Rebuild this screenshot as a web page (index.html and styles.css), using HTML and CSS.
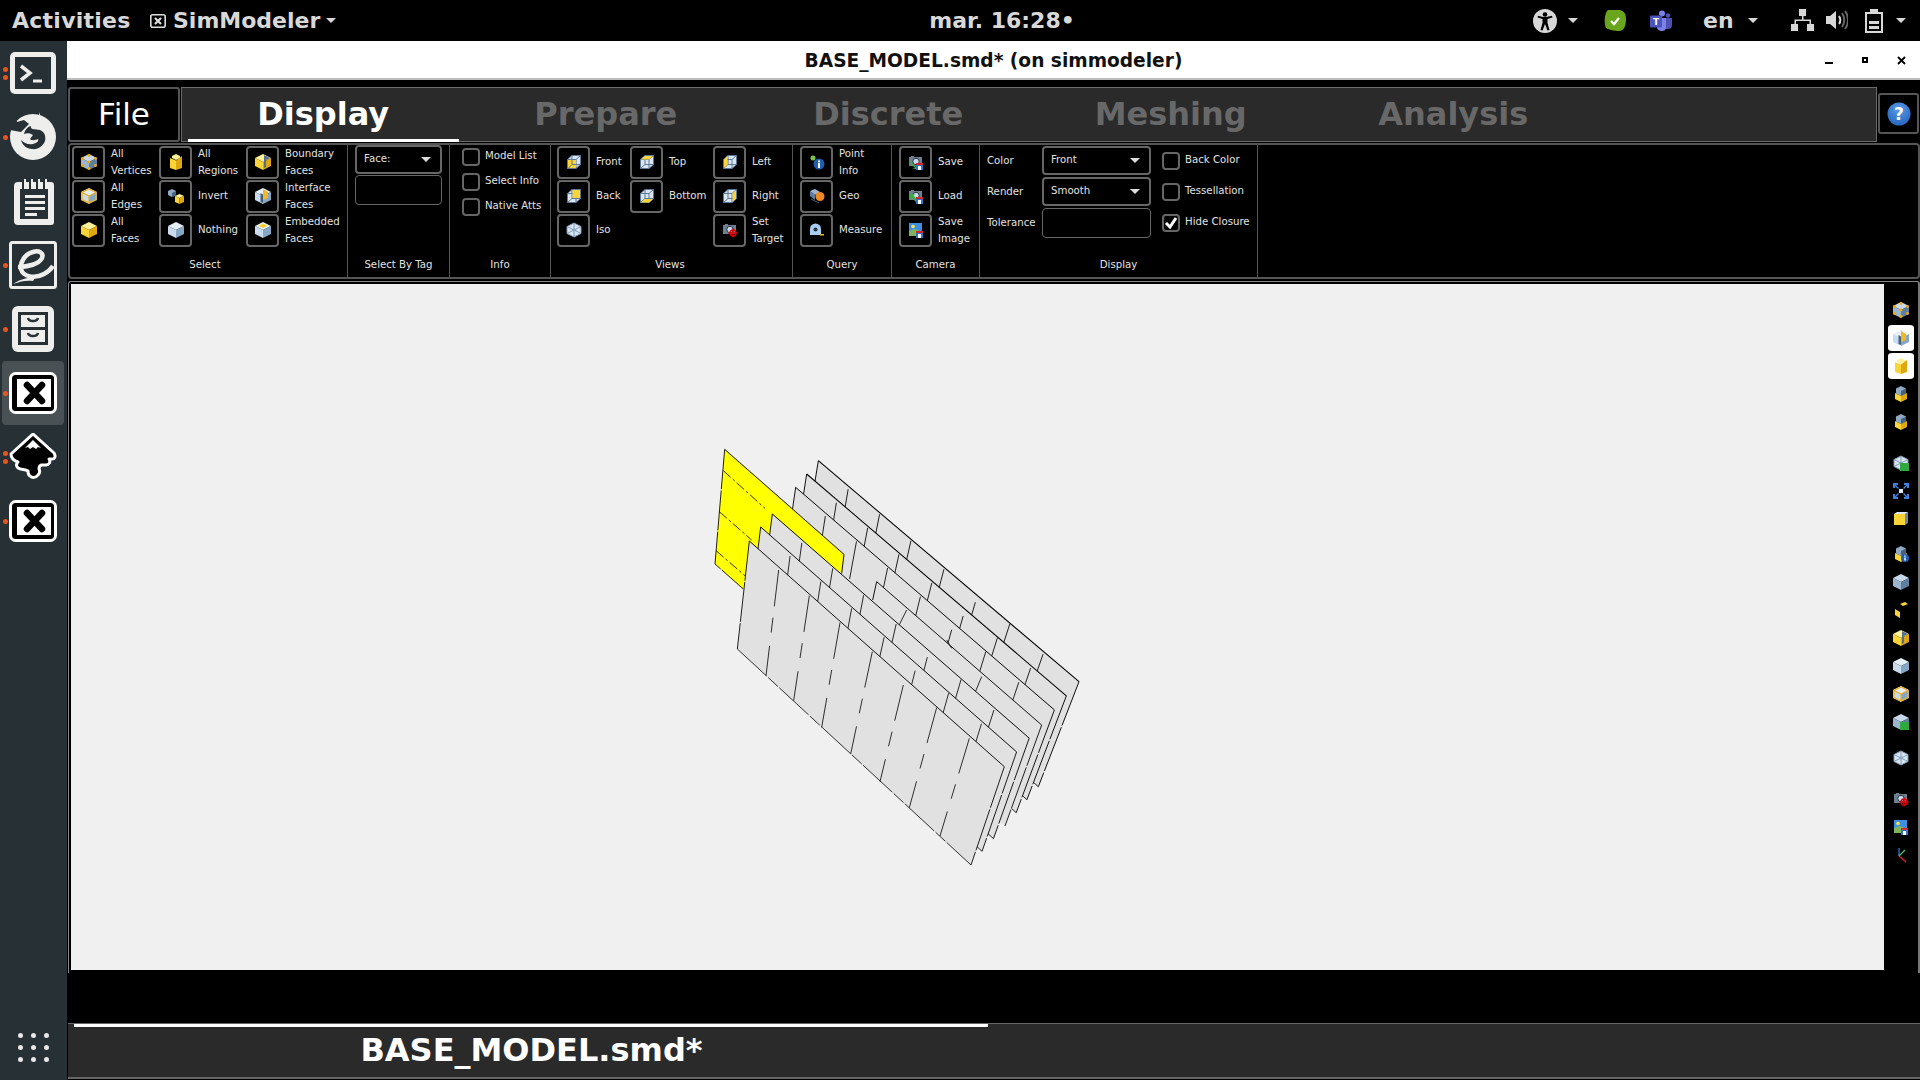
FILE: index.html
```html
<!DOCTYPE html>
<html>
<head>
	<title>BASE_MODEL.smd* (on simmodeler)</title>
	<link rel="stylesheet" href="styles.css">
</head>
<body>
	<!-- shared icon shapes -->
	<svg class="defs" width="0" height="0">
		<defs>
			<symbol id="c-blue" viewBox="0 0 16 16"><path fill="#c6d8ea" d="M8 0l8 4-8 4-8-4z"/><path fill="#9db6d0" d="M0 4l8 4v8l-8-4z"/><path fill="#5f7f9f" d="M16 4l-8 4v8l8-4z"/></symbol>
			<symbol id="c-pale" viewBox="0 0 16 16"><path fill="#e6eff8" d="M8 0l8 4-8 4-8-4z"/><path fill="#c9dcef" d="M0 4l8 4v8l-8-4z"/><path fill="#86a6c6" d="M16 4l-8 4v8l8-4z"/></symbol>
			<symbol id="c-yellow" viewBox="0 0 16 16"><path fill="#fff09a" d="M8 0l8 4-8 4-8-4z"/><path fill="#fbd437" d="M0 4l8 4v8l-8-4z"/><path fill="#e0a810" d="M16 4l-8 4v8l8-4z"/></symbol>
			<symbol id="c-mix" viewBox="0 0 16 16"><path fill="#8fa9c4" d="M8 0l5 2.500v5L8 10 3 7.500v-5z"/><path fill="#46617c" d="M13 2.500v5L8 10V5z"/><path fill="#fbd437" d="M2 7l6 3v6l-6-3z"/><path fill="#e0a810" d="M14 7l-6 3v6l6-3z"/></symbol>
			<symbol id="c-vert" viewBox="0 0 16 16"><use href="#c-blue"/><g fill="#f5a800"><circle cx="8" cy="1.500" r="1.400"/><circle cx="1.500" cy="4.500" r="1.400"/><circle cx="14.500" cy="4.500" r="1.400"/><circle cx="8" cy="8" r="1.400"/><circle cx="1.500" cy="11.500" r="1.400"/><circle cx="14.500" cy="11.500" r="1.400"/><circle cx="8" cy="14.500" r="1.400"/></g></symbol>
			<symbol id="c-edge" viewBox="0 0 16 16"><use href="#c-pale"/><path fill="none" stroke="#eeb020" stroke-width="1.300" d="M8 1l7 3.500v7L8 15l-7-3.500v-7zM1 4.500L8 8l7-3.500M8 8v7"/></symbol>
			<symbol id="c-region" viewBox="0 0 16 16"><path fill="#fff09a" d="M8 0l4 2v2L8 6 4 4V2z"/><path fill="#fbd437" d="M2 4l6 2.500V16l-6-2z"/><path fill="#e0a810" d="M14 2L8 6.500V16l6-2z"/></symbol>
			<symbol id="c-invert" viewBox="0 0 16 16"><path fill="#8fa9c4" d="M4 1l4 2v4L4 9 0 7V3z"/><path fill="#46617c" d="M8 3v4L4 9V5z"/><path fill="#fff09a" d="M11.500 6l4.500 2-4.500 2L7 8z"/><path fill="#fbd437" d="M7 8l4.500 2v6L7 14z"/><path fill="#e0a810" d="M16 8l-4.500 2v6l4.500-2z"/></symbol>
			<symbol id="c-bound" viewBox="0 0 16 16"><use href="#c-yellow"/><path fill="#52708e" d="M9 1l6 3-4 2v7l-2 1V5z"/></symbol>
			<symbol id="c-inter" viewBox="0 0 16 16"><use href="#c-pale"/><path fill="#f2b824" d="M8 1l5 3v6l-5 2z"/><path fill="#46617c" d="M5.500 5L8 6.500V15l-2.500-1z"/></symbol>
			<symbol id="c-embed" viewBox="0 0 16 16"><use href="#c-pale"/><path fill="#fbcf25" d="M8 1.500l4.500 2.300L8 6 3.500 3.800z"/></symbol>
			<symbol id="wire" viewBox="0 0 16 16"><path fill="#d9e5f2" stroke="#5b7896" d="M6 1.500h8.500v9L10 14.500H1.500v-9z"/><path fill="none" stroke="#5b7896" d="M1.500 5.500H10v9M10 5.500l4.500-4M6 1.500v9h8.500M6 10.500l-4.500 4"/></symbol>
			<symbol id="v-front" viewBox="0 0 16 16"><use href="#wire"/><path fill="#fbd437" d="M2 6h8v8H2z"/><path fill="none" stroke="#5b7896" d="M6 6v4.500H10M6 10.500l-4 4"/></symbol>
			<symbol id="v-back" viewBox="0 0 16 16"><use href="#wire"/><path fill="#fbd437" d="M6.500 2h7.500v8H6.500z"/></symbol>
			<symbol id="v-top" viewBox="0 0 16 16"><use href="#wire"/><path fill="#fbd437" d="M6 2h8l-4 3.500H2z"/></symbol>
			<symbol id="v-bottom" viewBox="0 0 16 16"><use href="#wire"/><path fill="#fbd437" d="M6 11h8l-4 3.500H2z"/></symbol>
			<symbol id="v-left" viewBox="0 0 16 16"><use href="#wire"/><path fill="#fbd437" d="M2 5.500L5.500 2v8.500L2 14z"/></symbol>
			<symbol id="v-right" viewBox="0 0 16 16"><use href="#wire"/><path fill="#fbd437" d="M10.500 5.500L14 2v8.500L10.500 14z"/></symbol>
			<symbol id="v-iso" viewBox="0 0 16 16"><path fill="#d9e5f2" stroke="#7f9ab5" d="M8 1l7 3.500v7L8 15l-7-3.500v-7z"/><path fill="none" stroke="#7f9ab5" d="M1 4.500l14 7M15 4.500l-14 7M8 1v14"/></symbol>
			<symbol id="camera" viewBox="0 0 16 16"><path fill="#6d7f90" d="M1 3h2V2h3v1h8v9H1z"/><circle cx="8" cy="7.500" r="3.200" fill="#c9dcef" stroke="#26323c"/></symbol>
			<symbol id="floppy" viewBox="0 0 16 16"><path fill="#2f74c8" d="M8 9h7v7H8z"/><path fill="#d8232a" d="M8 9h7v2H8z"/><path fill="#fff" d="M10 12h3v4h-3z"/></symbol>
			<symbol id="target" viewBox="0 0 16 16"><use href="#camera"/><g fill="none" stroke="#e00000" stroke-width="1.300"><circle cx="11" cy="11" r="3"/><path d="M11 6.500v9M6.500 11h9"/></g></symbol>
			<symbol id="p-info" viewBox="0 0 16 16"><circle cx="4" cy="4" r="2.500" fill="#7bc24b"/><circle cx="10" cy="10" r="5.500" fill="#1f5fb0"/><path fill="#fff" d="M9 6.500h2v1.800H9zM9 9h2v5H9z"/></symbol>
			<symbol id="p-geo" viewBox="0 0 16 16"><use href="#c-mix"/><circle cx="12" cy="12" r="4" fill="#1f5fb0"/><path fill="#fff" d="M11.300 9.500h1.400v1.300h-1.400zM11.300 11.500h1.400v3h-1.400z"/></symbol>
			<symbol id="geo" viewBox="0 0 16 16"><path fill="#9db6d0" d="M1 3l5-2 5 3-5 3z"/><path fill="#5f7f9f" d="M1 3l5 4v5L1 8z"/><path stroke="#46617c" d="M2 11l8 4"/><circle cx="11" cy="8.500" r="4.500" fill="#f08a24"/></symbol>
			<symbol id="measure" viewBox="0 0 16 16"><path fill="#a9cdf2" d="M1 13V7a5.500 5.500 0 0 1 11 0v6z"/><circle cx="6.500" cy="7.500" r="2" fill="#26323c"/><path fill="#f2b824" d="M11 12h4v1.500h-4z"/></symbol>
			<symbol id="cam-save" viewBox="0 0 16 16"><use href="#camera"/><path fill="#3fae3f" d="M2 7l6 6 1-3v5H4l3-1-6-6z"/><use href="#floppy"/></symbol>
			<symbol id="cam-load" viewBox="0 0 16 16"><use href="#camera"/><path fill="#3fae3f" d="M9 15L3 9l-1 3V6h6L5 7l6 6z"/><use href="#floppy"/></symbol>
			<symbol id="picture" viewBox="0 0 16 16"><path fill="#3f8fe0" d="M1 1h13v8H1z"/><path fill="#7fb45c" d="M1 9l6-2 7 3v4H1z"/><circle cx="5" cy="4.500" r="1.800" fill="#f6e24a"/><use href="#floppy"/></symbol>
			<symbol id="x-app" viewBox="0 0 48 42"><rect x="1.500" y="1.500" width="45" height="39" rx="5" fill="#000" stroke="#fff" stroke-width="3"/><rect x="8" y="7" width="34" height="28" fill="#fff"/><path stroke="#000" stroke-width="6.500" stroke-linecap="round" d="M18 13l15 16M33 13L18 29"/></symbol>
		</defs>
	</svg>

	<header class="topbar">
		<span class="activities">Activities</span>
		<span class="app-menu">
			<svg class="app-icon" viewBox="0 0 16 14"><rect x=".8" y=".8" width="14.400" height="12.400" rx="2" fill="none" stroke="#ddd" stroke-width="1.600"/><path stroke="#ddd" stroke-width="2.200" d="M5 4l6 6M11 4l-6 6"/></svg>
			SimModeler<i class="caret"></i>
		</span>
		<span class="clock">mar. 16:28&#8226;</span>
		<div class="tray">
			<svg class="tray-a11y" viewBox="0 0 24 24"><circle cx="12" cy="12" r="12" fill="#d8d8d8"/><circle cx="12" cy="5.500" r="2.300"/><path d="M4.500 8.500l5 1.500v4l-2 7 2 .5 2.500-6.500 2.500 6.500 2-.5-2-7v-4l5-1.500-.5-1.800-5.500 1.300h-3.500L5 6.700z"/></svg>
			<i class="caret caret-a11y"></i>
			<svg class="tray-shield" viewBox="0 0 22 22"><path fill="#6aa51e" d="M4 0h12c4 1 6 4 6 9 0 7-2 12-7 12-4 0-10-1-13-3C0 15 0 3 4 0z"/><path fill="none" stroke="#fff" stroke-width="2.200" d="M7 11l3 3 5-6"/></svg>
			<svg class="tray-teams" viewBox="0 0 22 22"><circle cx="12" cy="3.500" r="3" fill="#7b83eb"/><circle cx="18" cy="5.500" r="2.300" fill="#4f52b2"/><path fill="#4f52b2" d="M14 8h8v7c0 3-2 4-4 4h-4z"/><path fill="#7b83eb" d="M7 8h9v9c0 3-2 4-4 4s-5-1-5-4z"/><rect y="5.500" width="12" height="12" rx="1" fill="#4b53bc"/><text x="6" y="15" class="teams-t">T</text></svg>
			<span class="lang">en</span>
			<i class="caret caret-lang"></i>
			<svg class="tray-net" viewBox="0 0 23 23"><path fill="#d8d8d8" d="M8 0h7v7H8zM0 15h7v7H0zM16 15h7v7h-7zM11 7h1.500v3.500H20V15h-1.500v-3H5v3H3.500v-4.500H11z"/></svg>
			<svg class="tray-vol" viewBox="0 0 23 23"><path fill="#d8d8d8" d="M1 7h4l6-5v18l-6-5H1z"/><path fill="none" stroke="#d8d8d8" stroke-width="2" d="M14 7c1.500 2.500 1.500 6 0 8"/><path fill="none" stroke="#666" stroke-width="2" d="M17 4c3 4 3 10 0 14M20 2c4 5 4 13 0 18"/></svg>
			<svg class="tray-bat" viewBox="0 0 18 24"><path fill="none" stroke="#d8d8d8" stroke-width="2" d="M1 4h16v19H1z"/><path fill="#d8d8d8" d="M5 0h8v4H5zM4 12h10v3H4zM4 17h10v3H4z"/></svg>
			<i class="caret caret-bat"></i>
		</div>
	</header>

	<div class="desktop">
		<nav class="dock">
			<div class="dock-item">
				<i class="pip pip-1"></i><i class="pip pip-2"></i>
				<svg class="dock-icon" viewBox="0 0 48 48"><rect x="1" y="3" width="46" height="42" rx="5" fill="#eeeeec"/><rect x="6" y="8" width="36" height="32" fill="#263035"/><path fill="none" stroke="#eeeeec" stroke-width="3.500" d="M12 17l9 7-9 7"/><path stroke="#eeeeec" stroke-width="3" d="M24 32h9"/></svg>
			</div>
			<div class="dock-item">
				<i class="pip pip-0"></i>
				<svg class="dock-icon dock-icon-fox" viewBox="0 0 48 48"><circle cx="24" cy="25" r="23" fill="#eeeeec"/><path fill="#eeeeec" d="M30 0c1 5 5 8 10 11l-10 3z"/><path fill="#263035" d="M1 18L7 4l1 6 7-2 5 4-8 8z"/><path fill="#263035" d="M22 14c-1 4 4 3 9 4 5 2 6 7 5 11-2 5-7 9-13 8-5 0-10-4-11-9 3 3 7 5 12 4 4-1 6-3 5-5-2 1-6 2-8 0l3-4c-3-2-6-2-9-1 1-4 3-7 7-8z"/></svg>
			</div>
			<div class="dock-item">
				<svg class="dock-icon" viewBox="0 0 48 48"><path fill="#eeeeec" d="M9 5h33a3 3 0 0 1 3 3v37a3 3 0 0 1-3 3H9a4 4 0 0 1-4-4V9a4 4 0 0 1 4-4z"/><path fill="#263035" d="M11 12h28v30H11zM13 3h3v9h-3zM20 3h3v9h-3zM27 3h3v9h-3zM34 3h3v9h-3z"/><path fill="#eeeeec" d="M15 2h2v10h-2zM22 2h2v10h-2zM29 2h2v10h-2zM36 2h2v10h-2zM16 18h20v3H16zM16 24h20v3H16zM16 30h20v3H16zM16 36h12v3H16z"/></svg>
			</div>
			<div class="dock-item">
				<i class="pip pip-0"></i>
				<svg class="dock-icon" viewBox="0 0 48 48"><rect x="1.500" y="1.500" width="45" height="45" rx="2" fill="#263035" stroke="#eeeeec" stroke-width="3"/><path fill="none" stroke="#eeeeec" stroke-width="4.500" d="M9 26c10 0 21-3 24-9 2-5-3-8-9-6-8 2-13 10-12 17 2 8 14 10 23 5 4-2 7-5 9-8"/><path fill="#eeeeec" d="M4 43c9-6 17-7 22-6l-2 3c-6-1-12 0-20 3z"/></svg>
			</div>
			<div class="dock-item">
				<i class="pip pip-0"></i>
				<svg class="dock-icon" viewBox="0 0 48 48"><rect x="3" y="1" width="42" height="46" rx="6" fill="#eeeeec"/><rect x="9" y="7" width="30" height="33" fill="#263035"/><path fill="#eeeeec" d="M12 10h24v12H12zM12 25h24v12H12z"/><path fill="none" stroke="#263035" stroke-width="2.500" d="M19 13c1 4 9 4 10 0M19 28c1 4 9 4 10 0"/></svg>
			</div>
			<div class="dock-item dock-item-active">
				<i class="pip pip-0"></i>
				<svg class="dock-icon dock-icon-x"><use href="#x-app"/></svg>
			</div>
			<div class="dock-item">
				<i class="pip pip-1"></i><i class="pip pip-2"></i>
				<svg class="dock-icon" viewBox="0 0 48 48"><path fill="#000" stroke="#fff" stroke-width="3" stroke-linejoin="round" d="M24 1l21 19c2 3 1 6-2 6h-3c2 3 0 6-3 6h-4c-2 0-3 2-3 4 1 2 1 4-1 6-2 3-6 3-8 1-2-1-2-3-2-5-3-2-7-1-10-3-2-2-2-4 0-6-3-1-7-3-7-8z"/><path fill="#fff" d="M24 7l8 8-3-1-2 2-3-2-3 2-2-2-3 1z"/></svg>
			</div>
			<div class="dock-item">
				<i class="pip pip-0"></i>
				<svg class="dock-icon dock-icon-x"><use href="#x-app"/></svg>
			</div>
			<div class="app-grid">
				<i></i><i></i><i></i><i></i><i></i><i></i><i></i><i></i><i></i>
			</div>
		</nav>

		<main class="window">
			<div class="titlebar">
				<span class="title">BASE_MODEL.smd* (on simmodeler)</span>
				<div class="win-controls">
					<i class="win-min"></i><i class="win-max"></i>
					<svg class="win-close" viewBox="0 0 9 9"><path stroke="#000" stroke-width="1.800" d="M1 1l7 7M8 1L1 8"/></svg>
				</div>
			</div>

			<div class="tabrow">
				<div class="file-tab">File</div>
				<div class="tabs">
					<div class="tab tab-active">Display</div>
					<div class="tab">Prepare</div>
					<div class="tab">Discrete</div>
					<div class="tab">Meshing</div>
					<div class="tab">Analysis</div>
				</div>
				<div class="help-btn">
					<svg viewBox="0 0 24 24"><defs><radialGradient id="help-fill" cx=".5" cy=".3" r=".8"><stop offset="0" stop-color="#5b9be8"/><stop offset="1" stop-color="#1f5fb8"/></radialGradient></defs><circle cx="12" cy="12" r="11.500" fill="url(#help-fill)"/><text x="12" y="18" class="help-mark">?</text></svg>
				</div>
			</div>

			<section class="ribbon">
				<div class="group group-select">
					<div class="group-body tool-grid">
						<div class="tool"><button class="btn"><svg><use href="#c-vert"/></svg></button><span>All<br>Vertices</span></div>
						<div class="tool"><button class="btn"><svg><use href="#c-region"/></svg></button><span>All<br>Regions</span></div>
						<div class="tool"><button class="btn"><svg><use href="#c-bound"/></svg></button><span>Boundary<br>Faces</span></div>
						<div class="tool"><button class="btn"><svg><use href="#c-edge"/></svg></button><span>All<br>Edges</span></div>
						<div class="tool tool-one"><button class="btn"><svg><use href="#c-invert"/></svg></button><span>Invert</span></div>
						<div class="tool"><button class="btn"><svg><use href="#c-inter"/></svg></button><span>Interface<br>Faces</span></div>
						<div class="tool"><button class="btn"><svg><use href="#c-yellow"/></svg></button><span>All<br>Faces</span></div>
						<div class="tool tool-one"><button class="btn"><svg><use href="#c-pale"/></svg></button><span>Nothing</span></div>
						<div class="tool"><button class="btn"><svg><use href="#c-embed"/></svg></button><span>Embedded<br>Faces</span></div>
					</div>
					<div class="group-label">Select</div>
				</div>

				<div class="group group-tag">
					<div class="group-body tag-body">
						<div class="combo">Face:<i class="combo-arrow"></i></div>
						<div class="field"></div>
					</div>
					<div class="group-label">Select By Tag</div>
				</div>

				<div class="group group-info">
					<div class="group-body check-list">
						<label class="check"><i class="box"></i>Model List</label>
						<label class="check"><i class="box"></i>Select Info</label>
						<label class="check"><i class="box"></i>Native Atts</label>
					</div>
					<div class="group-label">Info</div>
				</div>

				<div class="group group-views">
					<div class="group-body tool-grid views-grid">
						<div class="tool tool-one"><button class="btn"><svg><use href="#v-front"/></svg></button><span>Front</span></div>
						<div class="tool tool-one"><button class="btn"><svg><use href="#v-top"/></svg></button><span>Top</span></div>
						<div class="tool tool-one"><button class="btn"><svg><use href="#v-left"/></svg></button><span>Left</span></div>
						<div class="tool tool-one"><button class="btn"><svg><use href="#v-back"/></svg></button><span>Back</span></div>
						<div class="tool tool-one"><button class="btn"><svg><use href="#v-bottom"/></svg></button><span>Bottom</span></div>
						<div class="tool tool-one"><button class="btn"><svg><use href="#v-right"/></svg></button><span>Right</span></div>
						<div class="tool tool-one"><button class="btn"><svg><use href="#v-iso"/></svg></button><span>Iso</span></div>
						<div class="tool"></div>
						<div class="tool"><button class="btn"><svg><use href="#target"/></svg></button><span>Set<br>Target</span></div>
					</div>
					<div class="group-label">Views</div>
				</div>

				<div class="group group-query">
					<div class="group-body tool-stack">
						<div class="tool"><button class="btn"><svg><use href="#p-info"/></svg></button><span>Point<br>Info</span></div>
						<div class="tool tool-one"><button class="btn"><svg><use href="#geo"/></svg></button><span>Geo</span></div>
						<div class="tool tool-one"><button class="btn"><svg><use href="#measure"/></svg></button><span>Measure</span></div>
					</div>
					<div class="group-label">Query</div>
				</div>

				<div class="group group-camera">
					<div class="group-body tool-stack">
						<div class="tool tool-one"><button class="btn"><svg><use href="#cam-save"/></svg></button><span>Save</span></div>
						<div class="tool tool-one"><button class="btn"><svg><use href="#cam-load"/></svg></button><span>Load</span></div>
						<div class="tool"><button class="btn"><svg><use href="#picture"/></svg></button><span>Save<br>Image</span></div>
					</div>
					<div class="group-label">Camera</div>
				</div>

				<div class="group group-display">
					<div class="group-body display-body">
						<div class="display-row"><span class="row-label">Color</span><div class="combo combo-wide">Front<i class="combo-arrow"></i></div><label class="check"><i class="box"></i>Back Color</label></div>
						<div class="display-row"><span class="row-label">Render</span><div class="combo combo-wide">Smooth<i class="combo-arrow"></i></div><label class="check"><i class="box"></i>Tessellation</label></div>
						<div class="display-row"><span class="row-label">Tolerance</span><div class="field field-wide"></div><label class="check"><i class="box box-on"><svg viewBox="0 0 14 14"><path fill="none" stroke="#fff" stroke-width="3" d="M2 7l4 4 6-9"/></svg></i>Hide Closure</label></div>
					</div>
					<div class="group-label">Display</div>
				</div>
			</section>

			<div class="stage">
				<div class="viewport">
					<svg class="model" viewBox="0 0 1290 1350">
						<defs>
							<g id="sheet">
								<path class="sheet-face" d="M208 333L973 1010 873 1305 172 657z"/>
								<path class="sheet-top" d="M208 333L973 1010"/>
								<path class="sheet-side" d="M208 333L172 657"/>
								<path class="sheet-right" d="M973 1010L873 1305"/>
								<path class="sheet-bottom" d="M172 657L873 1305"/>
								<path class="sheet-rib" d="M296 420L258 737M388 497L341 812M480 578L425 892M577 665L512 972M670 765L600 1055M770 833L688 1133M868 925L780 1218"/>
							</g>
						</defs>
						<use href="#sheet" transform="matrix(1.0679 -.0602 -.0516 1.0474 210.06 -244.26)"/>
						<use href="#sheet" transform="matrix(1.0565 -.05 -.043 1.0395 174.57 -203.75)"/>
						<use href="#sheet" transform="matrix(1.0452 -.04 -.0344 1.0316 141.06 -163.2)"/>
						<path class="sheet-face" d="M590 455L1085 885 975 1188 540 800z"/>
						<path class="sheet-top" d="M590 455L1085 885M590 455L578 510"/>
						<path class="sheet-right" d="M1085 885L975 1188"/>
						<path class="sheet-rib" d="M680 540L645 610M815 655L800 630M905 740L880 800"/>
						<path class="sheet-yellow" d="M134 58L492 373 485 430 300 290 190 477 105 402z"/>
						<path class="sheet-top" d="M134 58L492 373 485 430"/>
						<path class="sheet-side" d="M134 58L105 402 190 477"/>
						<path class="sheet-dots" d="M130 122L255 235M118 245L215 330M108 362L195 437"/>
						<use href="#sheet" transform="matrix(1.0226 -.02 -.0172 1.0158 70.03 -82.1)"/>
						<use href="#sheet" transform="matrix(1.0113 -.01 -.0086 1.0079 34.51 -42.55)"/>
						<use href="#sheet"/>
					</svg>
				</div>
				<aside class="side-tools">
					<span class="side-tool"><svg><use href="#c-vert"/></svg></span>
					<span class="side-tool side-tool-on"><svg><use href="#c-inter"/></svg></span>
					<span class="side-tool side-tool-on"><svg><use href="#c-region"/></svg></span>
					<span class="side-tool"><svg><use href="#c-mix"/></svg></span>
					<span class="side-tool"><svg><use href="#c-mix"/></svg></span>
					<span class="side-tool side-gap-l"><svg viewBox="0 0 16 16"><use href="#v-iso"/><path fill="#2fa83f" d="M7 8h9v8H7z"/></svg></span>
					<span class="side-tool"><svg viewBox="0 0 16 16"><path fill="#3f7fe0" d="M0 0h5v2H3l3 3-1 1-3-3v2H0zM16 0v5h-2V3l-3 3-1-1 3-3h-2V0zM0 16v-5h2v2l3-3 1 1-3 3h2v2zM16 16h-5v-2h2l-3-3 1-1 3 3v-2h2z"/><path fill="#dfe8f2" d="M6 6h4v4H6z"/></svg></span>
					<span class="side-tool"><svg viewBox="0 0 16 16"><path fill="#fbd437" d="M1 3h11v11H1z"/><path fill="#6b88a6" d="M12 3l3-2v11l-3 2z"/><path fill="#dfe8f2" d="M1 3l3-2h11l-3 2z"/></svg></span>
					<span class="side-tool side-gap-m"><svg><use href="#p-geo"/></svg></span>
					<span class="side-tool"><svg><use href="#c-blue"/></svg></span>
					<span class="side-tool"><svg viewBox="0 0 16 16"><path fill="#fbd437" d="M2 7l5 3v6l-5-3zM7 2l5-2 3 2-5 2z"/></svg></span>
					<span class="side-tool"><svg><use href="#c-bound"/></svg></span>
					<span class="side-tool"><svg><use href="#c-pale"/></svg></span>
					<span class="side-tool"><svg><use href="#c-edge"/></svg></span>
					<span class="side-tool"><svg viewBox="0 0 16 16"><use href="#c-blue"/><path fill="#2fa83f" d="M7 8h9v8H7z"/></svg></span>
					<span class="side-tool side-gap-s"><svg><use href="#v-iso"/></svg></span>
					<span class="side-tool side-gap-l"><svg><use href="#target"/></svg></span>
					<span class="side-tool"><svg><use href="#picture"/></svg></span>
					<span class="side-tool"><svg viewBox="0 0 16 16"><g fill="none" stroke-width="1.300"><path stroke="#2f74c8" d="M6 9V1"/><path stroke="#e02020" d="M6 9l7 6"/><path stroke="#4fc060" d="M6 9l6-6"/></g></svg></span>
				</aside>
			</div>

			<div class="doc-tabs"><span class="doc-tab">BASE_MODEL.smd*</span></div>
		</main>
	</div>
</body>
</html>
```

FILE: styles.css
```css
* {
	box-sizing: border-box;
}
html, body {
	margin: 0;
	height: 100%;
}
body {
	width: 1920px;
	height: 1080px;
	overflow: hidden;
	display: flex;
	flex-direction: column;
	background-color: #000;
	font-family: "DejaVu Sans", sans-serif;
	color: #e2e2e2;
}
.defs {
	position: absolute;
}
i {
	display: block;
	font-style: normal;
}

/* Top bar */
.topbar {
	position: relative;
	flex: 0 0 41px;
	display: flex;
	align-items: center;
	padding-left: 12px;
	background-color: #000;
	color: #d8d8d8;
	font-size: 22px;
	font-weight: bold;
}
.activities {
	width: 138px;
	letter-spacing: .25px;
}
.app-menu {
	display: flex;
	align-items: center;
	gap: 7px;
}
.app-icon {
	width: 16px;
	height: 14px;
}
.caret {
	width: 0;
	height: 0;
	border-left: 5px solid transparent;
	border-right: 5px solid transparent;
	border-top: 5px solid #d8d8d8;
}
.app-menu .caret {
	margin-left: -1px;
}
.clock {
	position: absolute;
	left: 1002px;
	transform: translateX(-50%);
	font-weight: bold;
}
.tray {
	position: absolute;
	left: 1533px;
	top: 0;
	height: 41px;
	display: flex;
	align-items: center;
}
.tray-a11y {
	width: 24px;
	height: 24px;
}
.caret-a11y {
	margin-left: 11px;
}
.tray-shield {
	width: 22px;
	height: 22px;
	margin-left: 26px;
}
.tray-teams {
	width: 22px;
	height: 22px;
	margin-left: 24px;
}
.teams-t {
	fill: #fff;
	font-size: 9px;
	font-weight: bold;
	text-anchor: middle;
}
.lang {
	margin-left: 31px;
}
.caret-lang {
	margin-left: 14px;
}
.tray-net {
	width: 23px;
	height: 23px;
	margin-left: 33px;
}
.tray-vol {
	width: 23px;
	height: 23px;
	margin-left: 11px;
}
.tray-bat {
	width: 18px;
	height: 24px;
	margin-left: 17px;
}
.caret-bat {
	margin-left: 13px;
}

.desktop {
	flex: 1;
	display: flex;
	min-height: 0;
}

/* Dock */
.dock {
	position: relative;
	flex: 0 0 67px;
	display: flex;
	flex-direction: column;
	background-color: #263035;
}
.dock-item {
	position: relative;
	flex: 0 0 64px;
	display: flex;
	align-items: center;
	justify-content: center;
	margin-left: 2px;
	width: 62px;
	border-radius: 4px;
}
.dock-item-active {
	background-color: #4a5154;
}
.dock-icon {
	width: 48px;
	height: 48px;
}
.dock-icon-x {
	height: 42px;
}
.dock-icon-fox {
	margin-bottom: 3px;
}
.pip {
	position: absolute;
	left: 1px;
	width: 5px;
	height: 5px;
	border-radius: 50%;
	background-color: #e95420;
}
.pip-0 {
	top: 30px;
}
.pip-1 {
	top: 26px;
}
.pip-2 {
	top: 34px;
}
.app-grid {
	position: absolute;
	left: 18px;
	top: 992px;
	width: 31px;
	display: grid;
	grid-template-columns: repeat(3, 5px);
	gap: 7px 8px;
}
.app-grid i {
	width: 5px;
	height: 5px;
	border-radius: 50%;
	background-color: #e8e8e8;
}

/* Window */
.window {
	flex: 1;
	min-width: 0;
	display: flex;
	flex-direction: column;
	background-color: #000;
}
.titlebar {
	position: relative;
	flex: 0 0 39px;
	display: flex;
	align-items: center;
	justify-content: center;
	background-color: #fff;
	border-bottom: 2px solid #bdbdbd;
	color: #000;
}
.title {
	padding-top: 2px;
	font-size: 18.6px;
	font-weight: bold;
	color: #111;
}
.win-controls {
	position: absolute;
	right: 0;
	top: 0;
	height: 38px;
	width: 110px;
}
.win-min {
	position: absolute;
	left: 15px;
	top: 21px;
	width: 8px;
	height: 2px;
	background-color: #000;
}
.win-max {
	position: absolute;
	left: 52px;
	top: 16px;
	width: 6px;
	height: 6px;
	border: 2px solid #000;
}
.win-close {
	position: absolute;
	left: 87px;
	top: 15px;
	width: 9px;
	height: 9px;
}

/* Tabs */
.tabrow {
	flex: 0 0 55px;
	display: flex;
	margin-top: 7px;
	padding-left: 1px;
}
.file-tab {
	flex: 0 0 112px;
	height: 55px;
	border: 2px solid #555;
	border-radius: 3px;
	font-size: 31px;
	line-height: 50px;
	text-align: center;
	color: #fff;
	margin-right: 1px;
}
.tabs {
	flex: 0 0 1696px;
	display: flex;
	height: 55px;
	background-color: #2a2a2a;
	border: 1px solid #6a6a6a;
}
.tab {
	position: relative;
	width: 282.5px;
	font-size: 32px;
	font-weight: bold;
	line-height: 53px;
	text-align: center;
	color: #686868;
}
.tab-active {
	color: #fff;
}
.tab-active::after {
	content: "";
	position: absolute;
	left: 6px;
	right: 6px;
	bottom: -1px;
	height: 3px;
	background-color: #fff;
}
.help-btn {
	flex: 0 0 41px;
	height: 41px;
	margin: 6px 0 0 1px;
	display: flex;
	align-items: center;
	justify-content: center;
	border: 2px solid #555;
	border-radius: 3px;
}
.help-btn svg {
	width: 24px;
	height: 24px;
}
.help-mark {
	fill: #fff;
	font-size: 17px;
	font-weight: bold;
	text-anchor: middle;
}

/* Ribbon */
.ribbon {
	flex: 0 0 136px;
	display: flex;
	margin: 1px 0 0 1px;
	border: 2px solid #555;
	border-radius: 4px;
	font-size: 10.2px;
	line-height: 17px;
}
.group {
	flex: none;
	display: flex;
	flex-direction: column;
	height: 132px;
	border-right: 1px solid #555;
}
.group-select { width: 278px; }
.group-tag { width: 102px; }
.group-info { width: 101px; }
.group-views { width: 242px; }
.group-query { width: 99px; }
.group-camera { width: 88px; }
.group-display { width: 278px; }
.group-body {
	flex: 1;
	min-height: 0;
}
.group-label {
	flex: 0 0 27px;
	text-align: center;
	padding-top: 6px;
}
.group-select .group-label {
	padding-right: 7px;
}
.group-views .group-label {
	padding-right: 3px;
}
.tool-grid {
	display: grid;
	grid-template-columns: repeat(3, 87px);
	grid-auto-rows: 34px;
	padding-left: 2px;
}
.views-grid {
	grid-template-columns: 73px 83px 80px;
	padding-left: 6px;
}
.tool-stack {
	display: flex;
	flex-direction: column;
	padding-left: 7px;
}
.tool {
	display: flex;
	align-items: center;
	gap: 6px;
	height: 34px;
	white-space: nowrap;
}
.tool-one span {
	margin-top: -2px;
}
.btn {
	flex: none;
	display: flex;
	align-items: center;
	justify-content: center;
	width: 33px;
	height: 33px;
	padding: 0;
	background: none;
	border: 2px solid #666;
	border-radius: 4px;
}
.btn svg {
	width: 16px;
	height: 16px;
}
.tag-body {
	display: flex;
	flex-direction: column;
	gap: 1px;
	padding-left: 7px;
}
.combo {
	position: relative;
	width: 87px;
	height: 29px;
	padding-left: 7px;
	border: 2px solid #666;
	border-radius: 4px;
	line-height: 24px;
}
.combo-arrow {
	position: absolute;
	right: 9px;
	top: 10px;
	width: 0;
	height: 0;
	border-left: 5px solid transparent;
	border-right: 5px solid transparent;
	border-top: 5px solid #ddd;
}
.field {
	width: 87px;
	height: 30px;
	border: 1px solid #666;
	border-radius: 4px;
}
.check-list {
	display: flex;
	flex-direction: column;
	gap: 7px;
	padding: 3px 0 0 12px;
}
.check {
	display: flex;
	align-items: flex-start;
	gap: 5px;
	height: 18px;
	line-height: 16px;
	white-space: nowrap;
}
.box {
	flex: none;
	display: flex;
	align-items: center;
	justify-content: center;
	width: 18px;
	height: 18px;
	border: 2px solid #666;
	border-radius: 4px;
}
.box-on svg {
	width: 14px;
	height: 14px;
}
.display-body {
	display: flex;
	flex-direction: column;
	padding-left: 7px;
}
.display-row {
	display: flex;
	align-items: center;
	height: 31px;
}
.row-label {
	flex: 0 0 55px;
	margin-top: -1px;
}
.combo-wide {
	width: 109px;
	margin-right: 11px;
}
.field-wide {
	width: 109px;
	margin-right: 11px;
}

/* 3D view */
.stage {
	position: relative;
	flex: 0 0 692px;
	display: flex;
	margin: 2px 0 0 1px;
	padding: 2px 0 0 2px;
	border: 1px solid #888;
	border-bottom: none;
	border-right: 2px solid #777;
	border-radius: 3px 3px 0 0;
}
.viewport {
	position: relative;
	flex: 0 0 1813px;
	height: 686px;
	background-color: #f0f0f0;
}
.model {
	position: absolute;
	left: 609px;
	top: 146px;
	width: 430px;
	height: 450px;
	overflow: visible;
}
.sheet-face {
	fill: #e1e1e1;
}
.sheet-yellow {
	fill: #ffff00;
}
.sheet-top {
	fill: none;
	stroke: #000;
	stroke-width: 2.8;
}
.sheet-side {
	fill: none;
	stroke: #000;
	stroke-width: 2.6;
	stroke-dasharray: 120 4;
}
.sheet-right {
	fill: none;
	stroke: #000;
	stroke-width: 2.6;
	stroke-dasharray: 130 5;
}
.sheet-bottom {
	fill: none;
	stroke: #000;
	stroke-width: 2.4;
	stroke-dasharray: 120 6 40 5;
}
.sheet-rib {
	fill: none;
	stroke: #000;
	stroke-width: 2.4;
	stroke-dasharray: 110 34 45 40;
}
.sheet-dots {
	fill: none;
	stroke: #000;
	stroke-width: 2.4;
	stroke-dasharray: 30 8 8 8;
}
.side-tools {
	flex: 1;
	display: flex;
	flex-direction: column;
	align-items: center;
	padding: 12px 0 0 0;
	margin-left: -1px;
	background-color: #000;
}
.side-tool {
	flex: 0 0 28px;
	display: flex;
	align-items: center;
	justify-content: center;
	width: 26px;
	height: 28px;
}
.side-tool svg {
	width: 16px;
	height: 16px;
}
.side-tool-on {
	position: relative;
	background-color: #fff;
	border-radius: 4px;
	background-clip: content-box;
	padding: 1px 0;
}
.side-gap-s { margin-top: 8px; }
.side-gap-m { margin-top: 7px; }
.side-gap-l { margin-top: 13px; }

/* Document tabs */
.doc-tabs {
	flex: 0 0 56px;
	position: relative;
	margin: 50px 0 0 1px;
	background-color: #2a2a2a;
	border-top: 1px solid #666;
	border-bottom: 2px solid #666;
}
.doc-tabs::before {
	content: "";
	position: absolute;
	left: 6px;
	top: 0;
	width: 914px;
	height: 3px;
	background-color: #fff;
}
.doc-tab {
	display: block;
	width: 927px;
	text-align: center;
	font-size: 32px;
	font-weight: bold;
	line-height: 53px;
	color: #fff;
}
```
